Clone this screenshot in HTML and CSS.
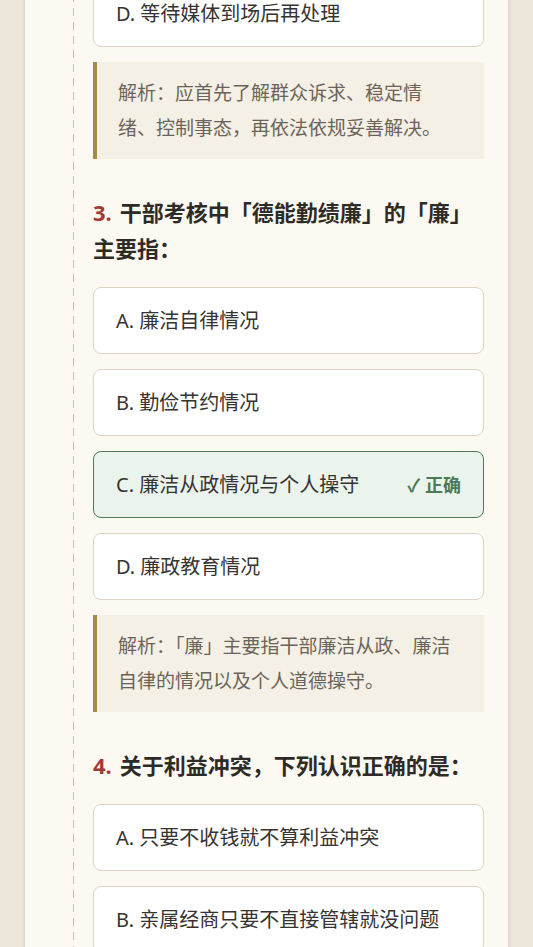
FILE: index.html
```html
<!DOCTYPE html>
<html lang="zh-CN">
<head>
<meta charset="utf-8">
<title>廉政知识测试</title>
<link rel="stylesheet" href="styles.css">
</head>
<body>
<div class="page">
  <main class="paper">
    <section class="question question-tail">
      <div class="options">
        <div class="option">D. 等待媒体到场后再处理</div>
      </div>
      <div class="analysis">解析：应首先了解群众诉求、稳定情绪、控制事态，再依法依规妥善解决。</div>
    </section>

    <section class="question">
      <h2 class="q-title"><span class="q-num">3.</span>干部考核中「德能勤绩廉」的「廉」主要指：</h2>
      <div class="options">
        <div class="option">A. 廉洁自律情况</div>
        <div class="option">B. 勤俭节约情况</div>
        <div class="option correct"><span>C. 廉洁从政情况与个人操守</span><span class="badge">✓ 正确</span></div>
        <div class="option">D. 廉政教育情况</div>
      </div>
      <div class="analysis">解析：「廉」主要指干部廉洁从政、廉洁自律的情况以及个人道德操守。</div>
    </section>

    <section class="question">
      <h2 class="q-title"><span class="q-num">4.</span>关于利益冲突，下列认识正确的是：</h2>
      <div class="options">
        <div class="option">A. 只要不收钱就不算利益冲突</div>
        <div class="option">B. 亲属经商只要不直接管辖就没问题</div>
        <div class="option">C. 应主动报告并按规定回避</div>
        <div class="option">D. 利益冲突无法避免，不必在意</div>
      </div>
    </section>
  </main>
</div>
</body>
</html>
```

FILE: styles.css
```css
html, body {
  margin: 0;
  padding: 0;
  background: #ebe5da;
  height: 100%;
  overflow: hidden;
}

body {
  font-family: "Noto Sans", "Noto Sans CJK SC", sans-serif;
  color: #2f2c28;
}

.page {
  padding: 0 25px;
  height: 100%;
}

.paper {
  position: relative;
  background: #fcf9f2;
  min-height: 100%;
  padding: 0 24px 40px 68px;
  box-shadow: 0 0 3px rgba(120, 100, 70, 0.25);
}

.paper::before {
  content: "";
  position: absolute;
  left: 48px;
  top: 0;
  bottom: 0;
  width: 1px;
  background: repeating-linear-gradient(to bottom, #e0b3b3 0 8px, transparent 8px 14px);
}

.question {
  display: flex;
  flex-direction: column;
  margin-bottom: 35px;
}

.question-tail {
  margin-top: -20px;
}

.q-title {
  margin: 0 0 21px 0;
  font-size: 22px;
  line-height: 36px;
  font-weight: 700;
  color: #2e2b27;
}

.q-num {
  color: #a23a32;
  margin-right: 8px;
}

.options {
  display: flex;
  flex-direction: column;
  gap: 15px;
}

.option {
  display: flex;
  justify-content: space-between;
  align-items: center;
  background: #ffffff;
  border: 1px solid #ddd4c6;
  border-radius: 8px;
  padding: 16.5px 22px;
  font-size: 20px;
  line-height: 32px;
  color: #363331;
}

.option.correct {
  background: #ebf3ed;
  border-color: #4f7b5c;
}

.badge {
  color: #4b7a57;
  font-weight: 700;
  font-size: 18px;
}

.analysis {
  margin-top: 15px;
  background: #f4f0e5;
  border-left: 4px solid #a48b48;
  padding: 14px 28px 14px 21px;
  font-size: 19px;
  line-height: 34.5px;
  color: #6b6359;
}
```
